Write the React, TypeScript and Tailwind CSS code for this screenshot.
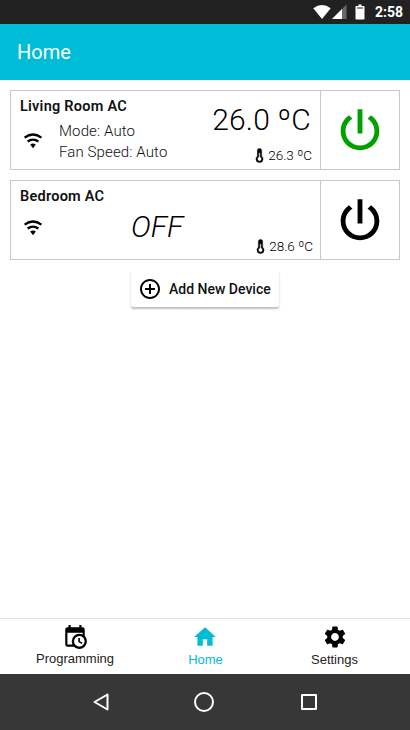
import React from "react";
import { MdHome, MdSettings, MdControlPoint } from "react-icons/md";

const POWER =
  "M16.56,5.44L15.11,6.89C16.84,7.94 18,9.83 18,12A6,6 0 0,1 12,18A6,6 0 0,1 6,12C6,9.83 7.16,7.94 8.88,6.88L7.44,5.44C5.36,6.88 4,9.28 4,12A8,8 0 0,0 12,20A8,8 0 0,0 20,12C20,9.28 18.64,6.88 16.56,5.44M13,3H11V13H13";
const THERMOMETER =
  "M17,17A5,5 0 0,1 12,22A5,5 0 0,1 7,17C7,15.36 7.79,13.91 9,13V5A3,3 0 0,1 12,2A3,3 0 0,1 15,5V13C16.21,13.91 17,15.36 17,17M11,8V14.17C9.83,14.58 9,15.69 9,17A3,3 0 0,0 12,20A3,3 0 0,0 15,17C15,15.69 14.17,14.58 13,14.17V8H11Z";
const CALENDAR_CLOCK =
  "M15,13H16.5V15.82L18.94,17.23L18.19,18.53L15,16.69V13M19,8H5V19H9.67C9.24,18.09 9,17.07 9,16A7,7 0 0,1 16,9C17.07,9 18.09,9.24 19,9.67V8M5,21C3.89,21 3,20.1 3,19V5C3,3.89 3.89,3 5,3H6V1H8V3H16V1H18V3H19A2,2 0 0,1 21,5V11.1C22.24,12.36 23,14.09 23,16A7,7 0 0,1 16,23C14.09,23 12.36,22.24 11.1,21H5M16,11.15A4.85,4.85 0 0,0 11.15,16C11.15,18.68 13.32,20.85 16,20.85A4.85,4.85 0 0,0 20.85,16C20.85,13.32 18.68,11.15 16,11.15Z";

function Glyph({ d, className }: { d: string; className: string }) {
  return (
    <svg viewBox="0 0 24 24" fill="currentColor" className={className}>
      <path d={d} />
    </svg>
  );
}

function Wifi({ className }: { className: string }) {
  return (
    <svg viewBox="0 0 22 22" fill="none" stroke="currentColor" strokeWidth="2.3" className={className}>
      <path d="M2.600 7.600Q11 1.300 19.400 7.600" />
      <path d="M5.600 11.500Q11 7.700 16.400 11.500" />
      <path d="M8.200 14.600Q11 12.600 13.800 14.600L11 18.200Z" fill="currentColor" stroke="none" />
    </svg>
  );
}

function StatusBar() {
  return (
    <div className="flex h-6 items-center justify-end bg-[#212121] pr-[7px] text-white">
      <svg width="54" height="24" viewBox="0 0 54 24" className="mr-[8px]">
        <path d="M0.3 8.2Q9 1.8 17.7 8.2L9 19Z" fill="#fff" />
        <path d="M33.500 4.500V19H19Z" fill="#686868" />
        <path d="M29 9V19H19Z" fill="#fff" />
        <path d="M45.500 4.500h3v1.500h2.200q.8 0 .8.8v11.900q0 .8-.8.8h-7.400q-.8 0-.8-.8V6.800q0-.8.8-.8h2.200z" fill="#fff" />
        <path d="M44 8h6" stroke="#212121" strokeWidth="1" />
      </svg>
      <span className="text-[14px] leading-6 font-bold">2:58</span>
    </div>
  );
}

function Device({
  name,
  temp,
  on,
  children,
}: {
  name: string;
  temp: string;
  on: boolean;
  children: React.ReactNode;
}) {
  return (
    <section className="flex h-20 border border-[#c8c8c8]">
      <div className="flex min-w-0 flex-1 flex-col pl-[9px]">
        <h2 className="mt-[6px] text-[14.500px] leading-5 font-semibold tracking-[0.25px] text-[#111]">{name}</h2>
        <div className="flex flex-1">{children}</div>
      </div>
      <div className={on ? "-ml-[110px] flex w-[110px] flex-col items-end pr-[8px]" : "-ml-[110px] flex w-[110px] flex-col items-end pr-[7px]"}>
        {on && (
          <div className="mt-[9px] mr-px text-[30px] leading-[40px] font-light tracking-[0.2px] whitespace-nowrap text-black">
            26.0 ºC
          </div>
        )}
        <div
          className={
            on
              ? "mt-[6px] flex items-center text-[13.500px] leading-[18px] font-light"
              : "mt-[56px] flex items-center text-[13.500px] leading-[18px] font-light"
          }
        >
          <Glyph d={THERMOMETER} className="h-[17px] w-[17px] stroke-black stroke-[0.7]" />
          {temp}
        </div>
      </div>
      <div className="flex w-[79px] justify-center border-l border-[#c8c8c8] pt-[11px]">
        <Glyph d={POWER} className={on ? "h-[58px] w-[58px] text-[#00a000]" : "h-[58px] w-[58px] text-black"} />
      </div>
    </section>
  );
}

export default function App() {
  return (
    <div className="flex h-[730px] w-[410px] flex-col overflow-hidden bg-white font-['Roboto',sans-serif] text-black">
      <StatusBar />
      <header className="flex h-14 items-center bg-[#00bcd7] pl-[17px] text-[20px] text-white">Home</header>

      <main className="flex flex-1 flex-col gap-2.5 p-2.5">
        <Device name="Living Room AC" temp="26.3 ºC" on>
          <Wifi className="mt-[13px] ml-[2px] h-[22px] w-[22px]" />
          <div className="mt-[4px] ml-[15px] text-[15px] leading-[21px] font-light tracking-[0.12px] text-[#111]">
            <div>Mode: Auto</div>
            <div>Fan Speed: Auto</div>
          </div>
        </Device>
        <Device name="Bedroom AC" temp="28.6 ºC" on={false}>
          <Wifi className="mt-[10px] ml-[2px] h-[22px] w-[22px]" />
          <div className="ml-[87px] text-[30px] leading-[40px] font-light italic">OFF</div>
        </Device>
        <button className="flex h-[37px] w-[148px] items-center self-center rounded-[2px] bg-white pl-[7px] text-[14px] font-medium whitespace-nowrap text-[#111] shadow-[0_2px_2px_rgba(0,0,0,0.25)]">
          <MdControlPoint className="mr-[7px] h-6 w-6 text-black" />
          <span className="pt-[2px]">Add New Device</span>
        </button>
      </main>

      <nav className="flex h-14 border-t border-[#e0e0e0] font-['Liberation_Sans',sans-serif] text-[13px] leading-4">
        <div className="flex w-[150px] flex-col items-center pt-[5px]">
          <Glyph d={CALENDAR_CLOCK} className="mr-px mb-[2px] h-[26px] w-[26px]" />
          <span className="-mt-px text-[#222]">Programming</span>
        </div>
        <div className="flex w-[111px] flex-col items-center pt-[5px] text-[#00bcd7]">
          <MdHome className="mr-px mb-[2px] h-[26px] w-[26px]" />
          Home
        </div>
        <div className="flex w-[147px] flex-col items-center pt-[5px]">
          <MdSettings className="mb-[2px] h-[26px] w-[26px]" />
          <span className="text-[#222]">Settings</span>
        </div>
      </nav>

      <footer className="flex h-14 items-center bg-[#373737] pl-[92px]">
        <svg width="226" height="24" viewBox="0 0 226 24" fill="none" stroke="#fff" strokeWidth="2" strokeLinejoin="round">
          <path d="M15.500 4.500V19.500L2.500 12Z" />
          <circle cx="112" cy="12" r="9" />
          <rect x="210" y="5" width="14" height="14" />
        </svg>
      </footer>
    </div>
  );
}
